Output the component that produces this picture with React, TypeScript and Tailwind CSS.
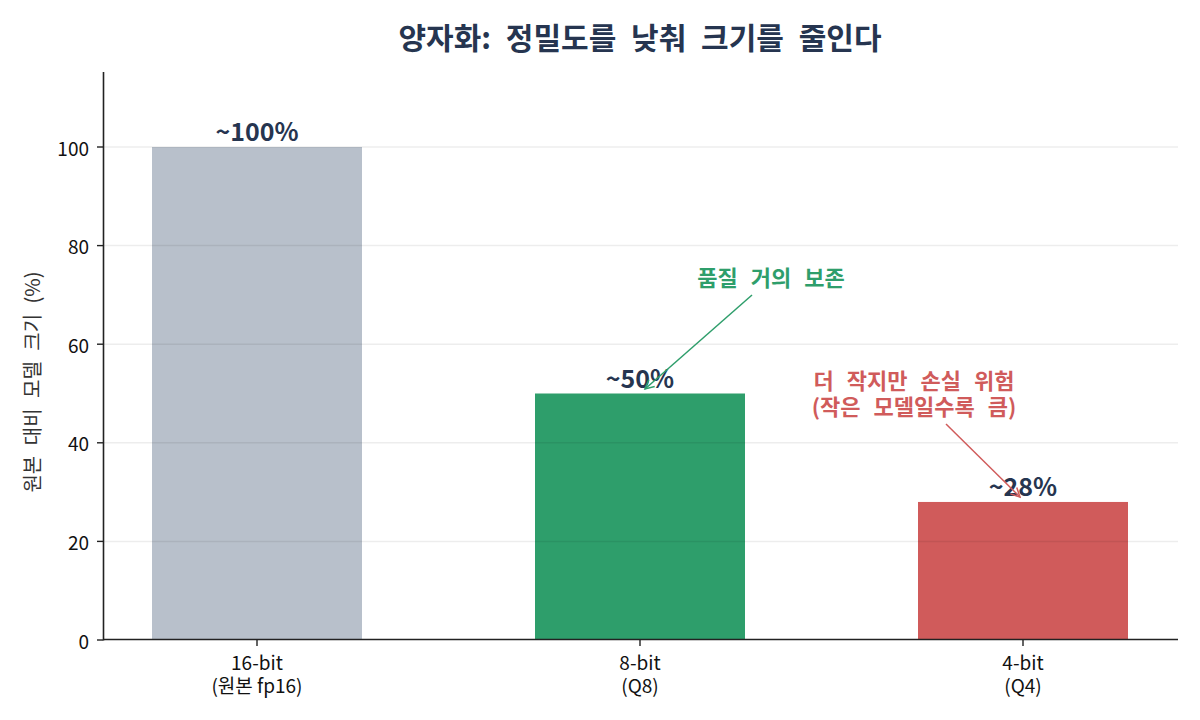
import React from "react";

const font = '"Noto Sans CJK KR", "Noto Sans", sans-serif';

// data → page coordinates
const y0 = 640;
const pxPerUnit = 4.93;
const yPos = (v: number) => y0 - v * pxPerUnit;

const bars = [
  { cx: 257, value: 100, color: "#b8c0cb", label: "~100%", tick: ["16-bit", "(원본 fp16)"] },
  { cx: 640, value: 50, color: "#2e9e6b", label: "~50%", tick: ["8-bit", "(Q8)"] },
  { cx: 1023, value: 28, color: "#d05b5b", label: "~28%", tick: ["4-bit", "(Q4)"] },
];

const yTicks = [0, 20, 40, 60, 80, 100];

export default function App() {
  return (
    <div className="w-[1200px] h-[720px] bg-white overflow-hidden font-['Noto_Sans_CJK_KR','Noto_Sans',sans-serif]">
      {/* title, centred over the axes */}
      <div className="pt-[18px] pl-[80px] text-center text-[30px] font-bold text-[#263550] leading-[36px] [word-spacing:8px]">
        양자화: 정밀도를 낮춰 크기를 줄인다
      </div>

      <div className="flex">
        {/* y axis label */}
        <div className="w-[50px] h-[666px] flex items-center justify-center pl-[14px] pb-[10px]">
          <div className="-rotate-90 whitespace-nowrap text-[20px] text-[#333] [word-spacing:6px]">
            원본 대비 모델 크기 (%)
          </div>
        </div>

        {/* plot */}
        <svg width={1150} height={666} viewBox="50 54 1150 666" className="block" fontFamily={font}>
          <defs>
            <marker id="headGreen" markerWidth="12" markerHeight="12" refX="10" refY="6" orient="auto" markerUnits="userSpaceOnUse">
              <path d="M1,1.5 L10,6 L1,10.5" fill="none" stroke="#2e9e6b" strokeWidth="1.5" />
            </marker>
            <marker id="headRed" markerWidth="12" markerHeight="12" refX="10" refY="6" orient="auto" markerUnits="userSpaceOnUse">
              <path d="M1,1.5 L10,6 L1,10.5" fill="none" stroke="#d05b5b" strokeWidth="1.5" />
            </marker>
          </defs>

          {/* bars */}
          {bars.map((b) => (
            <rect key={b.cx} x={b.cx - 105} y={yPos(b.value)} width={210} height={y0 - yPos(b.value)} fill={b.color} />
          ))}

          {/* grid */}
          {yTicks.slice(1).map((t) => (
            <line key={t} x1={104} x2={1178} y1={yPos(t)} y2={yPos(t)} stroke="rgba(0,0,0,0.07)" strokeWidth={1.5} />
          ))}

          {/* spines */}
          <line x1={103.5} x2={103.5} y1={72} y2={640.5} stroke="#222" strokeWidth={1.6} />
          <line x1={103} x2={1178} y1={639.5} y2={639.5} stroke="#222" strokeWidth={1.6} />

          {/* y ticks */}
          {yTicks.map((t) => (
            <g key={t}>
              <line x1={97} x2={103} y1={yPos(t)} y2={yPos(t)} stroke="#222" strokeWidth={1.4} />
              <text x={89} y={yPos(t)} textAnchor="end" dominantBaseline="central" fontSize={19} fill="#111">
                {t}
              </text>
            </g>
          ))}

          {/* x ticks */}
          {bars.map((b) => (
            <g key={b.cx}>
              <line x1={b.cx} x2={b.cx} y1={640} y2={646} stroke="#222" strokeWidth={1.4} />
              <text textAnchor="middle" fontSize={19} fill="#111">
                <tspan x={b.cx} y={670}>{b.tick[0]}</tspan>
                <tspan x={b.cx} dy={23}>{b.tick[1]}</tspan>
              </text>
            </g>
          ))}

          {/* value labels */}
          {bars.map((b) => (
            <text
              key={b.label}
              x={b.cx}
              y={yPos(b.value) - 17}
              textAnchor="middle"
              dominantBaseline="central"
              fontSize={25}
              fontWeight={700}
              fill="#263550"
            >
              {b.label}
            </text>
          ))}

          {/* annotations */}
          <text x={771} y={276} textAnchor="middle" dominantBaseline="central" fontSize={22} fontWeight={700} fill="#2e9e6b" className="[word-spacing:8px]">
            품질 거의 보존
          </text>
          <line x1={752} y1={295} x2={645} y2={389} stroke="#2e9e6b" strokeWidth={1.5} markerEnd="url(#headGreen)" />

          <text textAnchor="middle" fontSize={22} fontWeight={700} fill="#d05b5b" className="[word-spacing:8px]">
            <tspan x={914} y={389}>더 작지만 손실 위험</tspan>
            <tspan x={914} dy={26}>(작은 모델일수록 큼)</tspan>
          </text>
          <line x1={946} y1={424} x2={1020} y2={497} stroke="#d05b5b" strokeWidth={1.5} markerEnd="url(#headRed)" />
        </svg>
      </div>
    </div>
  );
}
